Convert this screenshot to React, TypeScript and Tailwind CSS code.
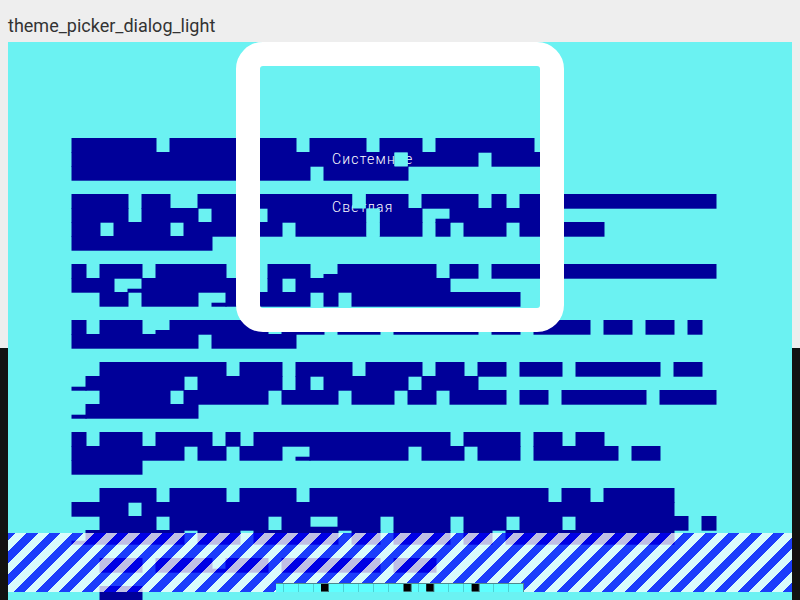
const ROWS: [number, [number, number][]][] = [
  [0, [[0, 6], [7, 16], [17, 21], [22, 25], [26, 33]]],
  [1, [[0, 23], [24, 29], [30, 34]]],
  [2, [[0, 17], [18, 24]]],
  [4, [[0, 4], [5, 7], [9, 20], [21, 24], [25, 29], [30, 31], [32, 46]]],
  [5, [[0, 4], [5, 9], [10, 13], [14, 21], [22, 25], [27, 34]]],
  [6, [[0, 2], [3, 7], [8, 15], [16, 21], [22, 25], [26, 27], [28, 31], [32, 38]]],
  [7, [[0, 10]]],
  [9, [[0, 1], [2, 5], [6, 11], [12, 13], [14, 17], [19, 26], [27, 29], [30, 46]]],
  [10, [[0, 3], [5, 13], [14, 15], [16, 27]]],
  [11, [[2, 4], [5, 9], [11, 17], [18, 19], [20, 32]]],
  [13, [[0, 1], [2, 5], [7, 14], [15, 18], [19, 22], [23, 29], [30, 32], [33, 37], [38, 40], [41, 43], [44, 45]]],
  [14, [[0, 9], [10, 16]]],
  [16, [[2, 11], [12, 15], [16, 20], [21, 25], [26, 28], [29, 31], [32, 35], [36, 42], [43, 45]]],
  [17, [[1, 8], [9, 15], [16, 17], [18, 24], [25, 29]]],
  [18, [[2, 7], [8, 14], [15, 19], [20, 23], [24, 26], [27, 31], [32, 34], [35, 41], [42, 46]]],
  [19, [[1, 9]]],
  [21, [[0, 1], [2, 5], [6, 10], [11, 12], [13, 27], [28, 32], [33, 35], [36, 38]]],
  [22, [[0, 8], [9, 11], [12, 15], [17, 24], [25, 28], [29, 32], [33, 39], [40, 42]]],
  [23, [[0, 5]]],
  [25, [[2, 6], [7, 11], [12, 16], [17, 34], [35, 37], [38, 43]]],
  [26, [[0, 4], [5, 43]]],
  [27, [[2, 6], [7, 14], [15, 17], [19, 22], [23, 27], [28, 31], [32, 35], [36, 44], [45, 46]]],
  [28, [[1, 8], [9, 12], [13, 19], [20, 22], [23, 27], [28, 30], [31, 43]]],
  [30, [[2, 5], [6, 10], [11, 14], [15, 22], [23, 26]]],
  [32, [[2, 5]]],
];

// small partial cells: [column, y, height, columns]
const NOTCHES: [number, number, number, number][] = [
  [18, 274, 4.7, 1],
  [26, 218.7, 4, 1],
  [10, 302.7, 4, 1],
  [6, 330, 4.7, 1],
  [0, 386.7, 4, 1],
  [0, 414.7, 4, 1],
  [16, 456.7, 4, 1],
  [17, 526.7, 4, 2],
  [0, 540.7, 4, 1],
  [10, 568.7, 4, 1],
  [4, 288.7, 4, 1],
];

const TICKS = [283, 298, 313, 328, 343, 358, 373, 388, 403, 418, 433, 448, 463, 478, 493, 508];
const MARKS = [321, 403.7, 426.3, 471.7];

function Blocks() {
  return (
    <svg className="absolute inset-0 h-[558px] w-[784px]" viewBox="8 42 784 558">
      {ROWS.flatMap(([n, spans]) =>
        spans.map(([a, b]) => (
          <rect
            key={`${n}-${a}`}
            x={71.5 + 14 * a}
            y={138 + 14 * n}
            width={14 * (b - a) + 1}
            height={14.7}
            fill="#000099"
          />
        )),
      )}
      {NOTCHES.map(([k, y, h, c]) => (
        <rect key={`${k}-${y}`} x={71.5 + 14 * k} y={y} width={14 * c + 1} height={h} fill="#000099" />
      ))}
    </svg>
  );
}

function Patches() {
  return (
    <svg className="absolute inset-0 h-[558px] w-[784px]" viewBox="8 42 784 558">
      <rect x={394.5} y={152.5} width={13.2} height={14} fill="#6bf2f2" />
      <rect x={352.5} y={194} width={13.2} height={14.5} fill="#6bf2f2" />
      <rect x={366.5} y={208.5} width={13.2} height={28} fill="#6bf2f2" />
    </svg>
  );
}

function TickBar() {
  return (
    <svg className="block h-[9px] w-[248px]" viewBox="276 583 248 9">
      <rect x={276} y={583} width={248} height={9} fill="#5fffff" />
      <rect x={276} y={583} width={248} height={1} fill="#4f8a8f" />
      {TICKS.map((x) => (
        <rect key={x} x={x} y={584} width={1} height={8} fill="#4fd0d4" />
      ))}
      <rect x={523} y={584} width={1} height={8} fill="#4f8a8f" />
      {MARKS.map((x) => (
        <g key={x}>
          <rect x={x} y={584} width={8} height={8} fill="#3c6a6e" />
          <rect x={x} y={584} width={7} height={7} fill="#000000" />
        </g>
      ))}
    </svg>
  );
}

export default function App() {
  return (
    <div className="flex h-[600px] w-[800px] flex-col overflow-hidden bg-[linear-gradient(#eeeeee_348px,#121212_348px)] px-2 [font-family:Roboto,sans-serif]">
      <div className="flex h-[42px] shrink-0 items-end pb-[4px] text-[18px] leading-[24px] text-[#333333]">
        theme_picker_dialog_light
      </div>
      <div className="relative flex flex-1 flex-col overflow-hidden bg-[#6bf2f2] pb-2">
        <Blocks />
        <div className="relative mx-auto flex h-[290px] w-[328px] flex-col rounded-[27px] border-[24px] border-white pl-[72px] pt-[69px] text-[14px] font-light tracking-[1.2px] text-white">
          <div className="flex h-12 items-center">Системное</div>
          <div className="flex h-12 items-center">Светлая</div>
        </div>
        <Patches />
        <div className="flex-1" />
        <div className="relative flex h-[59px] items-end justify-center bg-[repeating-linear-gradient(135deg,rgba(0,0,255,0.75)_0,rgba(0,0,255,0.75)_5.4px,rgba(255,255,255,0.75)_5.4px,rgba(255,255,255,0.75)_13.4px,rgba(0,0,255,0.75)_13.4px,rgba(0,0,255,0.75)_16px)]">
          <TickBar />
        </div>
      </div>
    </div>
  );
}
